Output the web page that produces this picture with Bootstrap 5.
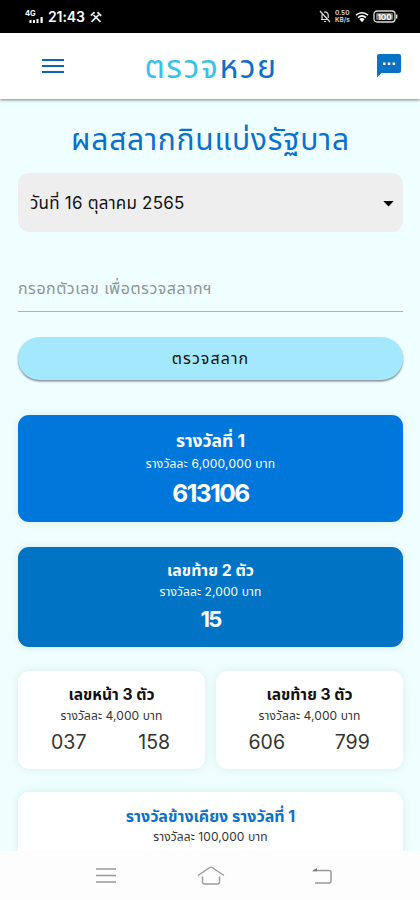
<!DOCTYPE html>
<html lang="th">
<head>
<meta charset="utf-8">
<meta name="viewport" content="width=device-width, initial-scale=1">
<title>ตรวจหวย</title>
<link href="https://cdn.jsdelivr.net/npm/bootstrap@5.3.0/dist/css/bootstrap.min.css" rel="stylesheet">
<style>
body{width:420px;height:900px;overflow:hidden;background:#efffff;font-family:Inter,"Noto Sans Thai","Noto Sans",sans-serif;color:#111}
svg{display:block;flex:none}
.screen{height:900px}
.status{height:33px;background:#000;padding:0 22px 0 25px}
.clock{font:600 14px/33px Inter,sans-serif;letter-spacing:-.1px;margin:0 5px 0 4px}
.rate{font:600 6.5px/7px Inter,sans-serif;width:16px;margin:0 4px 0 4px;color:#ddd}
.topbar{height:66px;padding:0 19px 0 42px;box-shadow:0 1px 3px rgba(0,0,0,.5);position:relative}
.brand-word{font-size:32px;line-height:40px;letter-spacing:1.55px;color:#35c3ea;padding-top:1px;margin-right:19px}
.brand-word b{font-weight:400;color:#0b70cb}
.content{min-height:0;padding:0 17px 0 18px}
.heading{margin:16px 0 0;height:58px;font-size:30px;line-height:48px;letter-spacing:.75px;color:#0b70cb;font-weight:400}
.picker{height:59px;border-radius:11px;background:#eee;padding:2px 9px 0 12px;font-size:17px;letter-spacing:.22px}
.number-field{height:41px;margin-top:39px;border-bottom:1.5px solid #aab2b3;font-size:16px;line-height:34px;letter-spacing:.5px;color:#8d9697}
.check-btn{height:43px;margin-top:25px;background:#a4e8fd;border:0;font-size:16px;line-height:43px;letter-spacing:1.1px;padding:0;color:#111;box-shadow:0 1.5px 2px rgba(0,0,0,.45)}
.prize{border:0;border-radius:11px;box-shadow:0 0 8px rgba(0,60,80,.1);padding-top:12px;text-align:center;color:#111}
.prize-1{height:107px;margin-top:35px;padding-top:14px;background:#0078db}
.prize-2{height:100px;margin-top:25px;background:#0073c4}
.prize-s{height:98px;flex:1 1 0}
.prize-last{height:120px;margin-top:23px}
.pair{margin-top:24px;gap:11px}
.p-name,.p-sub,.p-num{white-space:nowrap}
.p-name{font-size:15.6px;line-height:24px;font-weight:700}
.prize-1 .p-name{font-size:17.5px}
.prize-2 .p-name{font-size:15.8px}
.prize-last .p-name{font-size:16px;color:#0b70cb}
.p-sub{font-size:12px;line-height:18px;letter-spacing:.1px;color:#333}
.prize-1 .p-sub,.prize-2 .p-sub{color:#fff}
.prize-1 .p-sub{margin-top:2px;letter-spacing:.2px}
.p-num{font-size:19.5px;line-height:30px;margin-top:2px;color:#333}
.prize-1 .p-num{font-size:24.5px;letter-spacing:-1.5px;margin-top:5px;color:#fff}
.prize-2 .p-num{font-size:22px;letter-spacing:-1.800px;margin-top:3px;color:#fff}
.softkeys{height:49px;background:#fdfdfd;padding:0 88px 0 96px;position:relative}
.home-key{margin-right:7px}
</style>
</head>
<body>
<div class="screen d-flex flex-column">
<div class="status flex-shrink-0 d-flex align-items-center text-white">
  <svg width="19" height="14" viewBox="0 0 19 14" fill="#fff"><text x="0" y="6" font-size="7.5" font-weight="700" font-family="Inter">4G</text><path d="M4.500 10h2v3h-2zM8 10h2v3H8zM11.500 9h2v4h-2zM15.500 7h2.200v6h-2.200z"/></svg>
  <span class="clock">21:43</span>
  <svg width="12" height="12" viewBox="0 0 12 12" fill="none" stroke="#eee" stroke-width="1.700"><path d="M3.500 4l7 6.800M1.500 10.800l7.200-7M.8 4.600L4.600 1.200M7.500 1.200l3.700 3.600"/></svg>
  <svg class="ms-auto" width="12" height="13" viewBox="0 0 12 13" fill="none" stroke="#ddd" stroke-width="1.200"><path d="M1 1l10 11M2 9.500h7.500M3 9V5.500c0-1 .3-1.700.9-2.300M5 2.200c2-.8 4.200.5 4.200 3V8M5 11.500h2"/></svg>
  <span class="rate">0.50<br>KB/s</span>
  <svg width="14" height="12" viewBox="0 0 14 12" fill="none" stroke="#fff"><path stroke-width="1.600" d="M1 4.200c3.500-3.200 8.500-3.200 12 0M3 6.600c2.400-2.100 5.600-2.100 8 0"/><path fill="#fff" stroke="none" d="M4.300 8c1.700-1.300 3.700-1.300 5.400 0L7 11.200z"/></svg>
  <svg class="ms-1" width="25" height="13" viewBox="0 0 25 13"><rect x="1" y="1" width="21" height="11" rx="3" fill="none" stroke="#ddd" stroke-width="1.300"/><path d="M23.700 4.500v4" stroke="#ddd" stroke-width="1.400"/><rect x="3" y="3" width="17" height="7" rx="1.500" fill="#777"/><text x="11.500" y="9.500" text-anchor="middle" font-size="8" font-weight="700" font-family="Inter" fill="#fff">100</text></svg>
</div>
<header class="topbar flex-shrink-0 bg-white d-flex align-items-center justify-content-between">
  <svg width="22" height="16" viewBox="0 0 22 16"><path d="M0 2h22M0 8h22M0 14h22" stroke="#0b66b5" stroke-width="2.200"/></svg>
  <span class="brand-word"><span>ตรวจ</span><b>หวย</b></span>
  <svg width="24" height="24" viewBox="0 0 24 24"><path fill="#0872c4" d="M2 0h20a2 2 0 0 1 2 2v15a2 2 0 0 1-2 2H4.500L0 23.500V2a2 2 0 0 1 2-2z"/><path fill="#fff" d="M6 8.500h2.500V11H6zM10.800 8.500h2.500V11h-2.500zM15.600 8.500h2.500V11h-2.500z"/></svg>
</header>
<main class="content flex-grow-1 overflow-hidden">
  <h1 class="heading text-center text-nowrap">ผลสลากกินแบ่งรัฐบาล</h1>
  <div class="picker d-flex align-items-center justify-content-between"><span>วันที่ 16 ตุลาคม 2565</span><svg width="11" height="6" viewBox="0 0 11 6"><path d="M.3 0h10.400L5.500 5.600z"/></svg></div>
  <div class="number-field">กรอกตัวเลข เพื่อตรวจสลากฯ</div>
  <button type="button" class="check-btn btn rounded-pill w-100">ตรวจสลาก</button>
  <section class="prize prize-1 card"><div class="p-name text-white">รางวัลที่ 1</div><div class="p-sub">รางวัลละ 6,000,000 บาท</div><div class="p-num fw-bold">613106</div></section>
  <section class="prize prize-2 card"><div class="p-name text-white">เลขท้าย 2 ตัว</div><div class="p-sub">รางวัลละ 2,000 บาท</div><div class="p-num fw-bold">15</div></section>
  <div class="pair d-flex">
    <section class="prize prize-s card"><div class="p-name">เลขหน้า 3 ตัว</div><div class="p-sub">รางวัลละ 4,000 บาท</div><div class="p-num row g-0 px-2"><span class="col">037</span><span class="col">158</span></div></section>
    <section class="prize prize-s card"><div class="p-name">เลขท้าย 3 ตัว</div><div class="p-sub">รางวัลละ 4,000 บาท</div><div class="p-num row g-0 px-2"><span class="col">606</span><span class="col">799</span></div></section>
  </div>
  <section class="prize prize-last card"><div class="p-name">รางวัลข้างเคียง รางวัลที่ 1</div><div class="p-sub">รางวัลละ 100,000 บาท</div></section>
</main>
<nav class="softkeys flex-shrink-0 d-flex align-items-center justify-content-between">
  <svg width="20" height="15" viewBox="0 0 20 15"><path d="M0 1h20M0 7.500h20M0 14h20" stroke="#999" stroke-width="1.500"/></svg>
  <svg class="home-key" width="28" height="19" viewBox="0 0 28 19" fill="none" stroke="#999" stroke-width="1.400"><path d="M1 9.500L12.800 1.500q1.200-.7 2.400 0L27 9.500M5.500 10.500V16q0 2 2 2h13q2 0 2-2v-5.500"/></svg>
  <svg width="20" height="16" viewBox="0 0 20 16" fill="none" stroke="#999" stroke-width="1.500"><path d="M1 2.500h16q2 0 2 2V13q0 2-2 2H3"/><path fill="#777" stroke="none" d="M0 3.200L5 0v3.200z"/></svg>
</nav>
</div>
<script src="https://cdn.jsdelivr.net/npm/bootstrap@5.3.0/dist/js/bootstrap.bundle.min.js"></script>
</body>
</html>
